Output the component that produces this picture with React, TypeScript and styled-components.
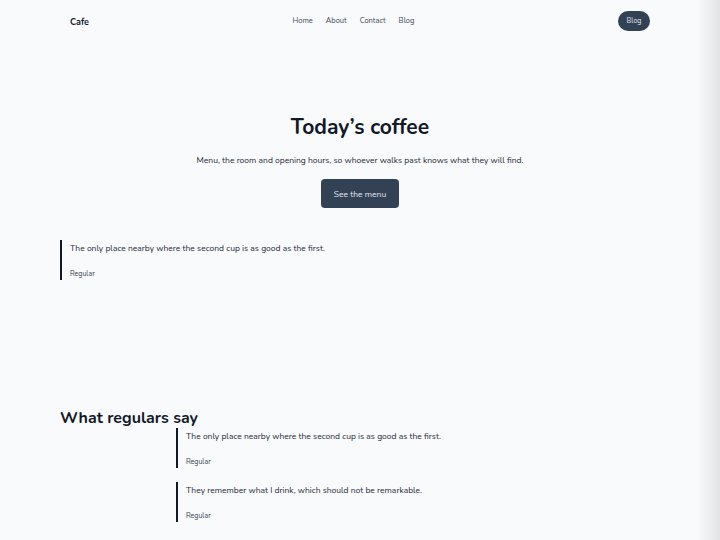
import React from 'react';
import styled, {createGlobalStyle} from 'styled-components';

const GlobalStyle=createGlobalStyle`
  html,body{
    margin:0;
    padding:0;
    background:#f8fafc;
  }
  body{
    font-family:"Nunito","Lato","Noto Sans",sans-serif;
    color:#1e293b;
  }
`

const Page=styled.div`
  min-height:540px;
  background:#f8fafc;
`

const Header=styled.header`
  display:flex;
  align-items:center;
  justify-content:space-between;
  height:41px;
  padding:0 70px;
`

const Brand=styled.a`
  font-size:9px;
  font-weight:700;
  color:#111827;
  text-decoration:none;
  padding-top:3px;
`

const Nav=styled.nav`
  display:flex;
  gap:13px;
  > a{
    font-size:7.5px;
    color:#3f4a5a;
    text-decoration:none;
  }
`

const PillButton=styled.button`
  border:none;
  background:#334155;
  color:#e2e8f0;
  font-family:inherit;
  font-size:7px;
  width:32px;
  height:20px;
  border-radius:10px;
  padding:0;
`

const Hero=styled.section`
  display:flex;
  flex-direction:column;
  align-items:center;
  padding-top:71px;
  h1{
    margin:0;
    font-size:21px;
    font-weight:700;
    color:#111827;
    line-height:30px;
  }
  p{
    margin:12px 0 0;
    font-size:8.5px;
    color:#1f2937;
  }
`

const MenuButton=styled.button`
  margin-top:13px;
  width:78px;
  height:29px;
  border:none;
  border-radius:4px;
  background:#334155;
  color:#e2e8f0;
  font-family:inherit;
  font-size:8.5px;
`

const Quote=styled.blockquote`
  margin:0;
  border-left:2px solid #111827;
  padding:2px 0 0 8px;
  height:40px;
  box-sizing:border-box;
  p{
    margin:0;
    font-size:8.5px;
    line-height:13px;
    color:#1f2937;
  }
  cite{
    display:block;
    margin-top:14px;
    font-style:normal;
    font-size:7px;
    line-height:10px;
    color:#374151;
  }
`

const Featured=styled.div`
  padding:32px 60px 0;
`

const Testimonials=styled.section`
  display:grid;
  grid-template-columns:116px 1fr;
  padding:128px 60px 0;
  h2{
    grid-column:1 / -1;
    margin:0;
    font-size:16px;
    font-weight:700;
    color:#111827;
    line-height:20px;
  }
`

const QuoteList=styled.div`
  grid-column:2;
  display:flex;
  flex-direction:column;
  gap:14px;
`

const EdgeShade=styled.div`
  position:fixed;
  top:0;
  right:0;
  width:24px;
  height:100%;
  pointer-events:none;
  background:linear-gradient(to right, rgba(0,0,0,0), rgba(0,0,0,0.09));
`

const quotes=[
    'The only place nearby where the second cup is as good as the first.',
    'They remember what I drink, which should not be remarkable.'
]

const App: React.FC=()=>{
    return (
        <Page>
            <GlobalStyle/>
            <Header>
                <Brand href='#'>Cafe</Brand>
                <Nav>
                    <a href='#'>Home</a>
                    <a href='#'>About</a>
                    <a href='#'>Contact</a>
                    <a href='#'>Blog</a>
                </Nav>
                <PillButton>Blog</PillButton>
            </Header>
            <Hero>
                <h1>Today’s coffee</h1>
                <p>Menu, the room and opening hours, so whoever walks past knows what they will find.</p>
                <MenuButton>See the menu</MenuButton>
            </Hero>
            <Featured>
                <Quote>
                    <p>{quotes[0]}</p>
                    <cite>Regular</cite>
                </Quote>
            </Featured>
            <Testimonials>
                <h2>What regulars say</h2>
                <QuoteList>
                    {quotes.map(q=>(
                        <Quote key={q}>
                            <p>{q}</p>
                            <cite>Regular</cite>
                        </Quote>
                    ))}
                </QuoteList>
            </Testimonials>
            <EdgeShade/>
        </Page>
    )
}
export default App
